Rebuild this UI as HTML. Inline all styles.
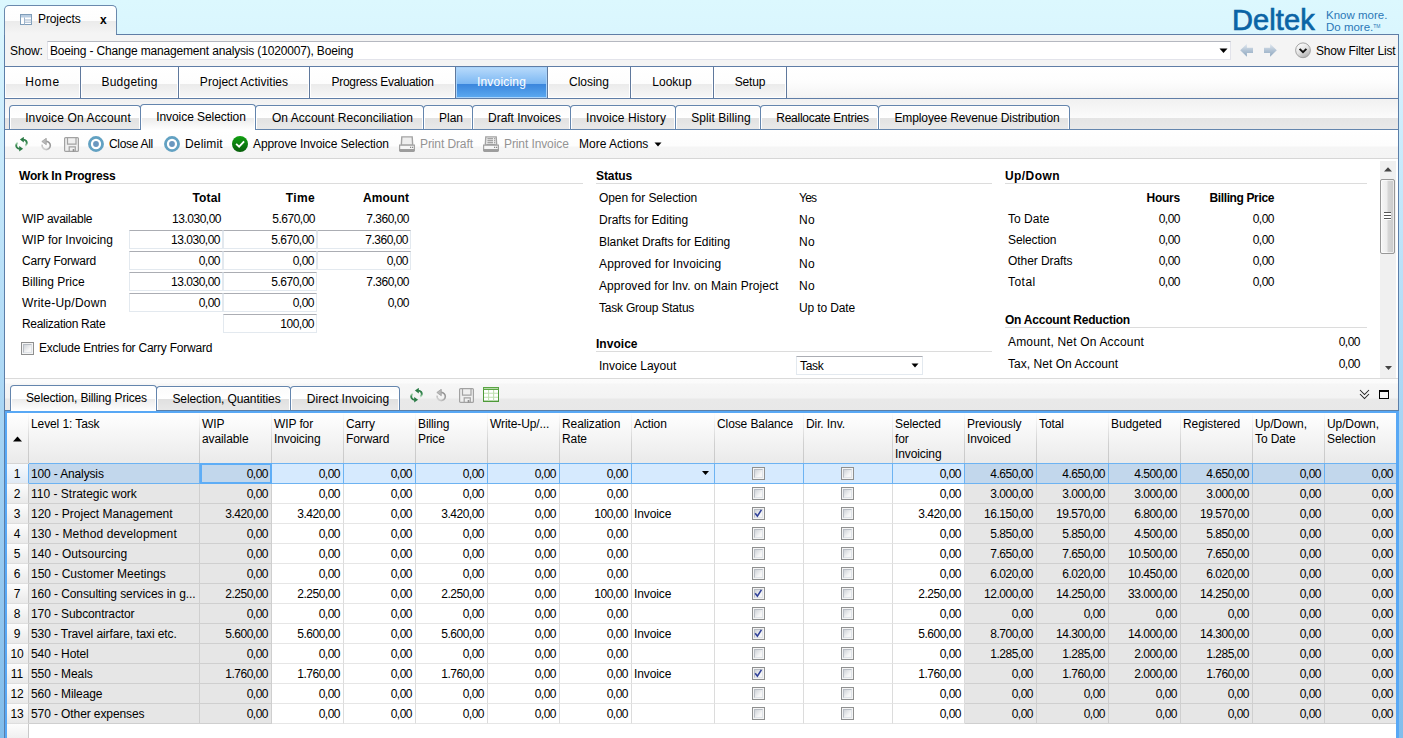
<!DOCTYPE html><html><head><meta charset="utf-8"><title>Projects</title><style>
*{box-sizing:border-box;margin:0;padding:0}
html,body{width:1403px;height:738px;overflow:hidden}
body{position:relative;font:12px "Liberation Sans",sans-serif;color:#000;letter-spacing:-0.1px;
 background:linear-gradient(#dcf8fe 0,#daf6fe 30px,#d0effd 100px,#b6def7 300px,#93c7ef 600px,#81bdeb 738px);}
.a{position:absolute;white-space:nowrap}
.t{position:absolute;white-space:nowrap;line-height:16px;height:16px}
.b{font-weight:bold}
.r{text-align:right}
.g{color:#9a9a9a}
#win{left:4px;top:34px;width:1395px;height:704px;background:#fff;border-left:1px solid #5c7ea8;border-right:1px solid #5c7ea8}
.hl{position:absolute;height:1px;background:#5f7da6}
.mt{position:absolute;top:67px;height:31px;line-height:31px;text-align:center;letter-spacing:0.15px;border-right:1px solid #5f789c;
 background:linear-gradient(#fff 0,#fdfdfd 54%,#ebebeb 55%,#f7f7f7 100%);box-shadow:inset 0 0 0 1px #fff}
.st{position:absolute;top:105px;height:24px;line-height:24px;text-align:center;padding-left:6px;border:1px solid #6485ad;border-bottom:none;border-radius:4px 4px 0 0;
 background:linear-gradient(#fbfbfb 0,#fff 52%,#e2e2e2 53%,#e9e9e9 100%);box-shadow:inset 1px 1px 0 #fff,inset -1px 0 0 #fff}
.st.sel{top:104px;height:26px;background:linear-gradient(#fff 0,#fff 50%,#ebebeb 51%,#fff 100%);line-height:25px;z-index:2}
.lt{position:absolute;top:386px;height:24px;line-height:25px;text-align:center;padding-left:6px;border:1px solid #6485ad;border-bottom:none;border-radius:4px 4px 0 0;
 background:linear-gradient(#fbfbfb 0,#fff 52%,#e0e0e0 53%,#e8e8e8 100%);box-shadow:inset 1px 1px 0 #fff,inset -1px 0 0 #fff}
.lt.sel{top:385px;height:26px;line-height:24px;background:linear-gradient(#fff 0,#fff 50%,#ebebeb 51%,#fff 100%);z-index:2}
.sec{position:absolute;height:1px;background:#dcdcdc}
.inp{position:absolute;height:19px;border:1px solid #e3e9ef;border-top-color:#abadb3;background:#fff;text-align:right;line-height:19px;padding-right:2px}
.cb{position:absolute;width:13px;height:13px;border:1px solid #8e8f8f;background:#f4f4f4}
.cb i{position:absolute;left:1px;top:1px;width:9px;height:9px;border:1px solid #b8bdc4;border-right-color:#dfe3e8;border-bottom-color:#dfe3e8;background:linear-gradient(135deg,#cfd3d8,#f6f6f6 70%)}
.hc{position:absolute;top:413px;height:50px;border-right:1px solid #d5d5d5;border-image:linear-gradient(#ffffff,#d0d0d0 60%,#c8c8c8) 1;line-height:15px;padding:4px 0 0 2px;white-space:normal;overflow:hidden}
.row{position:absolute;left:7px;width:1389px;height:20px}
.c{position:absolute;top:0;height:20px;line-height:20px;border-right:1px solid #dcdcdc;border-bottom:1px solid #e6e6e6;text-align:right;padding-right:2px;background:#fff;white-space:nowrap;overflow:hidden}
.c.gr{background:#e6e6e6;border-right-color:#cfcfcf;border-bottom-color:#cfcfcf}
.c.l{text-align:left;padding-left:2px;padding-right:0}
.c.n{background:linear-gradient(#fdfdfd,#e9e9e9);text-align:center;padding:0 1px 0 0;border-right-color:#c9c9c9;border-bottom-color:#dedede}
.row.s .c{background:#d6eafe;border-bottom-color:#6db3f2;border-right-color:#6db3f2}
.row.s .c.gr{background:#c2d7ec;border-right-color:#6db3f2}
.row.s .c.n{background:linear-gradient(#f6fafe,#dfe9f4);border-bottom-color:#dedede;border-right-color:#6db3f2}
.c.last{border-right:none}
.c.num{letter-spacing:-0.5px;padding-right:3px}
.num{letter-spacing:-0.5px}
</style></head><body>
<div class="a" id="win"></div>
<div class="a" style="left:4px;top:5px;width:113px;height:30px;border:1px solid #6a89ad;border-bottom:none;border-radius:5px 5px 0 0;background:linear-gradient(#fff 0,#fdfdfd 50%,#ebebeb 52%,#f5f5f5 100%)"></div>
<svg class="a" style="left:20px;top:14px" width="12" height="11" viewBox="0 0 12 11"><rect x="0.5" y="0.5" width="11" height="10" fill="#fff" stroke="#7f9db9"/><rect x="1" y="1" width="10" height="2.5" fill="#b9cde2"/><path d="M4.5 3.5v7M4.5 6h7M4.5 8.2h7" stroke="#9fb4cc" stroke-width="1" fill="none"/></svg>
<div class="t" style="left:38px;top:11px">Projects</div>
<div class="t b" style="left:100px;top:12px;font-size:12px;letter-spacing:0">x</div>
<div class="a" style="left:1232px;top:2px;font-size:29px;line-height:36px;color:#0b64a5;letter-spacing:0.1px;-webkit-text-stroke:0.7px #0b64a5">Deltek</div>
<div class="a" style="left:1326px;top:10px;font-size:11.5px;line-height:11px;color:#2b78b7;letter-spacing:0px">Know more.<br>Do more.<span style="font-size:5px;vertical-align:3px">TM</span></div>
<div class="hl" style="left:116px;top:34px;width:1283px"></div>
<div class="hl" style="left:5px;top:66px;width:1393px"></div>
<div class="hl" style="left:5px;top:98px;width:1393px"></div>
<div class="a" style="left:5px;top:35px;width:1393px;height:31px;background:#f4f4f4"></div>
<div class="a" style="left:5px;top:34px;width:111px;height:2px;background:#f4f4f4"></div>
<div class="t" style="left:10px;top:43px">Show:</div>
<div class="a" style="left:47px;top:41px;width:1184px;height:19px;border:1px solid #e2e3ea;border-top-color:#b5b8c0;background:#fff"></div>
<div class="t" style="left:50px;top:43px;letter-spacing:-0.17px">Boeing - Change management analysis (1020007), Boeing</div>
<svg class="a" style="left:1219px;top:48px" width="9" height="6"><path d="M0.5 0.5h8L4.5 5z" fill="#000"/></svg>
<svg class="a" style="left:1240px;top:43px" width="14" height="15" viewBox="0 0 14 15"><defs><linearGradient id="ag" x1="0" y1="0" x2="0" y2="1"><stop offset="0" stop-color="#e3eaf1"/><stop offset="0.5" stop-color="#b3c4d5"/><stop offset="1" stop-color="#8ea7bf"/></linearGradient></defs><path d="M0.2 7.3L6.9 0.8V4.8H13V9.9H6.9V13.8z" fill="url(#ag)"/></svg>
<svg class="a" style="left:1264px;top:43px" width="14" height="15" viewBox="0 0 14 15"><path d="M12.8 7.3L6.1 0.8V4.8H0V9.9H6.1V13.8z" fill="url(#ag)"/></svg>
<svg class="a" style="left:1295px;top:42px" width="16" height="17" viewBox="0 0 16 17"><defs><linearGradient id="rb" x1="0.2" y1="0" x2="0.8" y2="1"><stop offset="0" stop-color="#ffffff"/><stop offset="0.5" stop-color="#e2e2e2"/><stop offset="1" stop-color="#a9a9a9"/></linearGradient></defs><circle cx="8" cy="8.3" r="7.4" fill="url(#rb)" stroke="#9a9a9a" stroke-width="0.9"/><path d="M4.6 6.8L8 10.2l3.4-3.4" stroke="#111" stroke-width="1.9" fill="none"/></svg>
<div class="t" style="left:1316px;top:43px;letter-spacing:-0.16px">Show Filter List</div>
<div class="a" style="left:5px;top:67px;width:1393px;height:31px;background:linear-gradient(#fff 0,#fdfdfd 50%,#f3f3f3 100%)"></div>
<div class="mt" style="left:5px;width:76px;letter-spacing:0.66px">Home</div>
<div class="mt" style="left:81px;width:98px;letter-spacing:0.24px">Budgeting</div>
<div class="mt" style="left:179px;width:131px;letter-spacing:0.05px">Project Activities</div>
<div class="mt" style="left:310px;width:146px;letter-spacing:-0.28px">Progress Evaluation</div>
<div class="mt" style="left:456px;width:92px;color:#fff;background:linear-gradient(#b9dbfb 0,#7db8f3 54%,#3a85dc 55%,#5caaf1 100%);box-shadow:inset 0 0 0 1px #a9d3fa;letter-spacing:0.19px">Invoicing</div>
<div class="mt" style="left:548px;width:83px;letter-spacing:-0.02px">Closing</div>
<div class="mt" style="left:631px;width:83px;letter-spacing:0.01px">Lookup</div>
<div class="mt" style="left:714px;width:73px;letter-spacing:-0.19px">Setup</div>
<div class="a" style="left:5px;top:99px;width:1393px;height:31px;background:linear-gradient(#f1f1f1 0,#fbfbfb 19px,#e4e4e4 19px,#e9e9e9 30px)"></div>
<div class="st" style="left:9px;width:132px;letter-spacing:0.13px">Invoice On Account</div>
<div class="st sel" style="left:140px;width:116px;letter-spacing:-0.06px">Invoice Selection</div>
<div class="st" style="left:255px;width:169px;letter-spacing:0.04px">On Account Reconciliation</div>
<div class="st" style="left:423px;width:50px;letter-spacing:-0.01px">Plan</div>
<div class="st" style="left:472px;width:99px;letter-spacing:-0.04px">Draft Invoices</div>
<div class="st" style="left:570px;width:106px;letter-spacing:0.09px">Invoice History</div>
<div class="st" style="left:675px;width:86px;letter-spacing:0.08px">Split Billing</div>
<div class="st" style="left:760px;width:119px;letter-spacing:-0.28px">Reallocate Entries</div>
<div class="st" style="left:878px;width:192px;letter-spacing:-0.10px">Employee Revenue Distribution</div>
<div class="hl" style="left:5px;top:129px;width:136px;background:#6485ad"></div>
<div class="hl" style="left:255px;top:129px;width:1143px;background:#6485ad"></div>
<div class="a" style="left:5px;top:130px;width:1393px;height:28px;background:linear-gradient(#fff 0,#fdfdfd 16px,#f5f5f5 17px,#f4f4f4 100%)"></div>
<div class="a" style="left:5px;top:158px;width:1393px;height:1px;background:#d6d6d6"></div>
<svg class="a" style="left:15px;top:137px" width="13" height="15" viewBox="0 0 13 15"><defs><linearGradient id="ra1" x1="0" y1="0" x2="0" y2="1"><stop offset="0" stop-color="#2a7a45"/><stop offset="0.55" stop-color="#3a8a52"/><stop offset="1" stop-color="#c2e6c8"/></linearGradient><linearGradient id="rb1" x1="0" y1="1" x2="0" y2="0"><stop offset="0" stop-color="#2a7a45"/><stop offset="0.55" stop-color="#3a8a52"/><stop offset="1" stop-color="#c2e6c8"/></linearGradient></defs><path d="M8.2 2.6C10.8 2.6 12.1 4.5 11.7 6.7C11.5 7.7 11 8.4 10.2 8.8" stroke="url(#ra1)" stroke-width="1.9" fill="none"/><path d="M4.9 2.6L8.8 -0.2V5.4z" fill="#2a7a45"/><path d="M4.8 11.7C2.2 11.7 0.9 9.8 1.3 7.6C1.5 6.6 2 5.9 2.8 5.5" stroke="url(#rb1)" stroke-width="1.9" fill="none"/><path d="M8.1 11.7L4.2 8.9V14.5z" fill="#2a7a45"/></svg>
<svg class="a" style="left:41px;top:138px" width="11" height="13" viewBox="0 0 11 13"><defs><linearGradient id="ug2" x1="1" y1="0" x2="0" y2="1"><stop offset="0" stop-color="#8c8c8c"/><stop offset="0.5" stop-color="#a8a8a8"/><stop offset="1" stop-color="#dedede"/></linearGradient></defs><path d="M5.2 3.4A4.1 4.1 0 1 1 1.2 6.6" stroke="url(#ug2)" stroke-width="1.6" fill="none"/><path d="M0.8 3.5L5.3 0.2V6.8z" fill="#b9b9b9" stroke="#9a9a9a" stroke-width="0.7"/></svg>
<svg class="a" style="left:64px;top:137px" width="15" height="15" viewBox="0 0 15 15"><rect x="0.6" y="0.6" width="13.8" height="13.8" rx="1" fill="#f0f0f0" stroke="#a2a2a2" stroke-width="1.2"/><path d="M3.5 0.6V7.2H12V0.6M5.2 14.4V9.9H11.3V14.4" fill="none" stroke="#a2a2a2" stroke-width="1.2"/><rect x="8.7" y="12" width="1.6" height="2.6" fill="#909090"/></svg>
<svg class="a" style="left:88px;top:136px" width="16" height="16" viewBox="0 0 16 16"><circle cx="8" cy="8" r="6.55" fill="#fff" stroke="#62a1c2" stroke-width="2.8"/><circle cx="8" cy="8" r="2.9" fill="#6a97bf"/></svg>
<div class="t" style="left:109px;top:136px;letter-spacing:-0.3px">Close All</div>
<svg class="a" style="left:164px;top:136px" width="16" height="16" viewBox="0 0 16 16"><circle cx="8" cy="8" r="6.55" fill="#fff" stroke="#62a1c2" stroke-width="2.8"/><circle cx="8" cy="8" r="2.9" fill="#6a97bf"/></svg>
<div class="t" style="left:185px;top:136px;letter-spacing:0.15px">Delimit</div>
<svg class="a" style="left:232px;top:136px" width="16" height="16" viewBox="0 0 16 16"><defs><linearGradient id="gg" x1="0" y1="0" x2="0" y2="1"><stop offset="0" stop-color="#12a012"/><stop offset="1" stop-color="#075e0b"/></linearGradient></defs><circle cx="8" cy="8" r="8" fill="url(#gg)"/><path d="M4.1 7.8L7.1 10.7L12.1 5.3" stroke="#fff" stroke-width="1.8" fill="none"/></svg>
<div class="t" style="left:253px;top:136px;letter-spacing:-0.12px">Approve Invoice Selection</div>
<svg class="a" style="left:399px;top:136px" width="16" height="16" viewBox="0 0 16 16"><path d="M2.8 0.9h10.4l0.5 8.3H2.3z" fill="#eeeeee" stroke="#a3a3a3" stroke-width="1.4"/><path d="M0.6 9.2h14.8v4.3H0.6z" fill="#f6f6f6" stroke="#a3a3a3" stroke-width="1.2"/><path d="M0 13.2h16v1.4a1.4 1.4 0 0 1-1.4 1.4H1.4A1.4 1.4 0 0 1 0 14.6z" fill="#9d9d9d"/><rect x="11" y="10.7" width="1.2" height="1.3" fill="#888"/><rect x="13" y="10.7" width="1.2" height="1.3" fill="#888"/></svg>
<div class="t" style="left:420px;top:136px;color:#939393">Print Draft</div>
<svg class="a" style="left:483px;top:136px" width="16" height="16" viewBox="0 0 16 16"><path d="M2.8 0.9h10.4l0.5 8.3H2.3z" fill="#eeeeee" stroke="#a3a3a3" stroke-width="1.4"/><path d="M4.4 2.7h5.6M4.4 4.7h5.6M4.4 6.7h5.6M11 2.7h1.2M11 4.7h1.2M11 6.7h1.2" stroke="#8a8a8a" stroke-width="1.1"/><rect x="3.5" y="8" width="9" height="1.2" fill="#9a9a9a"/><path d="M0.6 9.2h14.8v4.3H0.6z" fill="#f6f6f6" stroke="#a3a3a3" stroke-width="1.2"/><path d="M0 13.2h16v1.4a1.4 1.4 0 0 1-1.4 1.4H1.4A1.4 1.4 0 0 1 0 14.6z" fill="#9d9d9d"/><rect x="11" y="10.7" width="1.2" height="1.3" fill="#888"/><rect x="13" y="10.7" width="1.2" height="1.3" fill="#888"/></svg>
<div class="t" style="left:504px;top:136px;color:#939393">Print Invoice</div>
<div class="t" style="left:579px;top:136px;letter-spacing:0">More Actions</div>
<svg class="a" style="left:654px;top:142px" width="8" height="5"><path d="M0.5 0.5h7L4 4.5z" fill="#000"/></svg>
<div class="a" style="left:5px;top:159px;width:1393px;height:219px;background:#fff"></div>
<div class="t b" style="left:19px;top:168px;letter-spacing:-0.16px">Work In Progress</div>
<div class="sec" style="left:19px;top:183px;width:564px"></div>
<div class="t r b" style="left:121px;width:100px;top:190px;letter-spacing:0.16px">Total</div>
<div class="t r b" style="left:215px;width:100px;top:190px;letter-spacing:0.34px">Time</div>
<div class="t r b" style="left:309px;width:100px;top:190px;letter-spacing:0.12px">Amount</div>
<div class="t " style="left:22px;top:211px;letter-spacing:-0.22px">WIP available</div>
<div class="t r  num" style="left:121px;width:100px;top:211px">13.030,00</div>
<div class="t r  num" style="left:215px;width:100px;top:211px">5.670,00</div>
<div class="t r  num" style="left:309px;width:100px;top:211px">7.360,00</div>
<div class="t " style="left:22px;top:232px;letter-spacing:0.03px">WIP for Invoicing</div>
<div class="inp num" style="left:129px;top:230px;width:94px">13.030,00</div>
<div class="inp num" style="left:223px;top:230px;width:94px">5.670,00</div>
<div class="inp num" style="left:317px;top:230px;width:94px">7.360,00</div>
<div class="t " style="left:22px;top:253px;letter-spacing:-0.21px">Carry Forward</div>
<div class="inp num" style="left:129px;top:251px;width:94px">0,00</div>
<div class="inp num" style="left:223px;top:251px;width:94px">0,00</div>
<div class="inp num" style="left:317px;top:251px;width:94px">0,00</div>
<div class="t " style="left:22px;top:274px;letter-spacing:-0.01px">Billing Price</div>
<div class="inp num" style="left:129px;top:272px;width:94px">13.030,00</div>
<div class="inp num" style="left:223px;top:272px;width:94px">5.670,00</div>
<div class="t r  num" style="left:309px;width:100px;top:274px">7.360,00</div>
<div class="t " style="left:22px;top:295px;letter-spacing:0.27px">Write-Up/Down</div>
<div class="inp num" style="left:129px;top:293px;width:94px">0,00</div>
<div class="inp num" style="left:223px;top:293px;width:94px">0,00</div>
<div class="t r  num" style="left:309px;width:100px;top:295px">0,00</div>
<div class="t " style="left:22px;top:316px;letter-spacing:-0.30px">Realization Rate</div>
<div class="inp num" style="left:223px;top:314px;width:94px">100,00</div>
<div class="cb" style="left:21px;top:342px"><i></i></div>
<div class="t " style="left:39px;top:340px;letter-spacing:-0.23px">Exclude Entries for Carry Forward</div>
<div class="t b" style="left:596px;top:168px;letter-spacing:-0.09px">Status</div>
<div class="sec" style="left:596px;top:183px;width:396px"></div>
<div class="t " style="left:599px;top:190px;letter-spacing:-0.07px">Open for Selection</div>
<div class="t " style="left:799px;top:190px;letter-spacing:-0.74px">Yes</div>
<div class="t " style="left:599px;top:212px;letter-spacing:-0.01px">Drafts for Editing</div>
<div class="t " style="left:799px;top:212px;letter-spacing:0.26px">No</div>
<div class="t " style="left:599px;top:234px;letter-spacing:-0.06px">Blanket Drafts for Editing</div>
<div class="t " style="left:799px;top:234px;letter-spacing:0.26px">No</div>
<div class="t " style="left:599px;top:256px;letter-spacing:0.13px">Approved for Invoicing</div>
<div class="t " style="left:799px;top:256px;letter-spacing:0.26px">No</div>
<div class="t " style="left:599px;top:278px;letter-spacing:0.07px">Approved for Inv. on Main Project</div>
<div class="t " style="left:799px;top:278px;letter-spacing:0.26px">No</div>
<div class="t " style="left:599px;top:300px;letter-spacing:-0.21px">Task Group Status</div>
<div class="t " style="left:799px;top:300px;letter-spacing:-0.14px">Up to Date</div>
<div class="t b" style="left:596px;top:336px;letter-spacing:0.03px">Invoice</div>
<div class="sec" style="left:596px;top:351px;width:396px"></div>
<div class="t " style="left:599px;top:358px;letter-spacing:-0.01px">Invoice Layout</div>
<div class="a" style="left:796px;top:356px;width:127px;height:19px;border:1px solid #e3e9ef;border-top-color:#abadb3;background:#fff"></div>
<div class="t " style="left:800px;top:358px;letter-spacing:-0.32px">Task</div>
<svg class="a" style="left:911px;top:363px" width="8" height="5"><path d="M0.5 0.5h7L4 4.5z" fill="#000"/></svg>
<div class="t b" style="left:1005px;top:168px;letter-spacing:0.43px">Up/Down</div>
<div class="sec" style="left:1005px;top:183px;width:362px"></div>
<div class="t r b" style="left:1080px;width:100px;top:190px;letter-spacing:-0.24px">Hours</div>
<div class="t r b" style="left:1174px;width:100px;top:190px;letter-spacing:-0.37px">Billing Price</div>
<div class="t " style="left:1008px;top:211px;letter-spacing:0.02px">To Date</div>
<div class="t r  num" style="left:1080px;width:100px;top:211px">0,00</div>
<div class="t r  num" style="left:1174px;width:100px;top:211px">0,00</div>
<div class="t " style="left:1008px;top:232px;letter-spacing:-0.12px">Selection</div>
<div class="t r  num" style="left:1080px;width:100px;top:232px">0,00</div>
<div class="t r  num" style="left:1174px;width:100px;top:232px">0,00</div>
<div class="t " style="left:1008px;top:253px;letter-spacing:-0.07px">Other Drafts</div>
<div class="t r  num" style="left:1080px;width:100px;top:253px">0,00</div>
<div class="t r  num" style="left:1174px;width:100px;top:253px">0,00</div>
<div class="t " style="left:1008px;top:274px;letter-spacing:0.46px">Total</div>
<div class="t r  num" style="left:1080px;width:100px;top:274px">0,00</div>
<div class="t r  num" style="left:1174px;width:100px;top:274px">0,00</div>
<div class="t b" style="left:1005px;top:312px;letter-spacing:-0.23px">On Account Reduction</div>
<div class="sec" style="left:1005px;top:327px;width:362px"></div>
<div class="t " style="left:1008px;top:334px;letter-spacing:0.18px">Amount, Net On Account</div>
<div class="t r  num" style="left:1260px;width:100px;top:334px">0,00</div>
<div class="t " style="left:1008px;top:356px;letter-spacing:0.04px">Tax, Net On Account</div>
<div class="t r  num" style="left:1260px;width:100px;top:356px">0,00</div>
<div class="a" style="left:1380px;top:161px;width:16px;height:217px;background:#f0f0f0"></div>
<svg class="a" style="left:1384px;top:167px" width="8" height="5"><path d="M0 4.5L4 0.3 8 4.5z" fill="#444"/></svg>
<svg class="a" style="left:1385px;top:366px" width="7" height="4"><path d="M0 0h7L3.5 4z" fill="#444"/></svg>
<div class="a" style="left:1380px;top:179px;width:15px;height:75px;border:1px solid #979797;border-radius:2px;background:linear-gradient(90deg,#f6f6f6 0,#ededed 45%,#d6d6d6 55%,#c9c9c9 100%);box-shadow:inset 0 0 0 1px rgba(255,255,255,.6)"></div>
<div class="a" style="left:1384px;top:212px;width:7px;height:8px;background:linear-gradient(#555 0,#555 1px,#fff 1px,#fff 3px,#555 3px,#555 4px,#fff 4px,#fff 6px,#555 6px,#555 7px,#fff 7px)"></div>
<div class="a" style="left:5px;top:378px;width:1393px;height:1px;background:#dadada"></div>
<div class="a" style="left:5px;top:379px;width:1393px;height:32px;background:linear-gradient(#fcfcfc 0,#fbfbfb 4px,#f6f6f6 5px,#f3f3f3 19px,#e9e9e9 20px,#e8e8e8 100%)"></div>
<div class="hl" style="left:156px;top:410px;width:1242px;background:#5a7fa8"></div>
<div class="hl" style="left:5px;top:410px;width:6px;background:#5a7fa8"></div>
<div class="lt sel" style="left:10px;width:147px;letter-spacing:-0.15px">Selection, Billing Prices</div>
<div class="lt" style="left:156px;width:135px;letter-spacing:-0.09px">Selection, Quantities</div>
<div class="lt" style="left:290px;width:110px;letter-spacing:0.02px">Direct Invoicing</div>
<svg class="a" style="left:410px;top:388px" width="13" height="15" viewBox="0 0 13 15"><defs><linearGradient id="ra3" x1="0" y1="0" x2="0" y2="1"><stop offset="0" stop-color="#2a7a45"/><stop offset="0.55" stop-color="#3a8a52"/><stop offset="1" stop-color="#c2e6c8"/></linearGradient><linearGradient id="rb3" x1="0" y1="1" x2="0" y2="0"><stop offset="0" stop-color="#2a7a45"/><stop offset="0.55" stop-color="#3a8a52"/><stop offset="1" stop-color="#c2e6c8"/></linearGradient></defs><path d="M8.2 2.6C10.8 2.6 12.1 4.5 11.7 6.7C11.5 7.7 11 8.4 10.2 8.8" stroke="url(#ra3)" stroke-width="1.9" fill="none"/><path d="M4.9 2.6L8.8 -0.2V5.4z" fill="#2a7a45"/><path d="M4.8 11.7C2.2 11.7 0.9 9.8 1.3 7.6C1.5 6.6 2 5.9 2.8 5.5" stroke="url(#rb3)" stroke-width="1.9" fill="none"/><path d="M8.1 11.7L4.2 8.9V14.5z" fill="#2a7a45"/></svg>
<svg class="a" style="left:436px;top:389px" width="11" height="13" viewBox="0 0 11 13"><defs><linearGradient id="ug4" x1="1" y1="0" x2="0" y2="1"><stop offset="0" stop-color="#8c8c8c"/><stop offset="0.5" stop-color="#a8a8a8"/><stop offset="1" stop-color="#dedede"/></linearGradient></defs><path d="M5.2 3.4A4.1 4.1 0 1 1 1.2 6.6" stroke="url(#ug4)" stroke-width="1.6" fill="none"/><path d="M0.8 3.5L5.3 0.2V6.8z" fill="#b9b9b9" stroke="#9a9a9a" stroke-width="0.7"/></svg>
<svg class="a" style="left:459px;top:388px" width="15" height="15" viewBox="0 0 15 15"><rect x="0.6" y="0.6" width="13.8" height="13.8" rx="1" fill="#f0f0f0" stroke="#a2a2a2" stroke-width="1.2"/><path d="M3.5 0.6V7.2H12V0.6M5.2 14.4V9.9H11.3V14.4" fill="none" stroke="#a2a2a2" stroke-width="1.2"/><rect x="8.7" y="12" width="1.6" height="2.6" fill="#909090"/></svg>
<svg class="a" style="left:483px;top:387px" width="16" height="15" viewBox="0 0 16 15"><rect x="0.5" y="0.5" width="15" height="14" fill="#fff" stroke="#4e9a38"/><rect x="0" y="0" width="16" height="3" fill="#5aa543"/><rect x="1" y="1" width="14" height="0.8" fill="#cfe8c4"/><rect x="0" y="13.6" width="16" height="1.4" fill="#4e9a38"/><path d="M1 6.3h14M1 10.3h14M5.6 3v11M10.6 3v11" stroke="#bfe0b0" stroke-width="1.1" fill="none"/></svg>
<svg class="a" style="left:1359px;top:389px" width="11" height="11" viewBox="0 0 11 11"><path d="M1 1l4.5 4.5L10 1M1 5l4.5 4.5L10 5" stroke="#222" stroke-width="1.05" fill="none"/></svg>
<div class="a" style="left:1379px;top:390px;width:10px;height:9px;border:1px solid #000;border-top-width:2px;background:#f4f4f4"></div>
<div class="a" style="left:1398px;top:411px;width:1px;height:327px;background:#58a8f5;z-index:3"></div>
<div class="a" style="left:5px;top:411px;width:1393px;height:327px;background:#fff;border:2px solid #58a8f5;border-bottom:none"></div>
<div class="a" style="left:7px;top:413px;width:1389px;height:51px;background:linear-gradient(#fff 0,#eaeaea 100%);border-bottom:1px solid #d5d5d5"></div>
<div class="hc" style="left:7px;width:22px"></div>
<div class="hc" style="left:29px;width:171px">Level 1: Task</div>
<div class="hc" style="left:200px;width:72px">WIP<br>available</div>
<div class="hc" style="left:272px;width:72px">WIP for<br>Invoicing</div>
<div class="hc" style="left:344px;width:72px">Carry<br>Forward</div>
<div class="hc" style="left:416px;width:72px">Billing<br>Price</div>
<div class="hc" style="left:488px;width:72px">Write-Up/...</div>
<div class="hc" style="left:560px;width:72px">Realization<br>Rate</div>
<div class="hc" style="left:632px;width:83px">Action</div>
<div class="hc" style="left:715px;width:89px">Close Balance</div>
<div class="hc" style="left:804px;width:89px">Dir. Inv.</div>
<div class="hc" style="left:893px;width:72px">Selected<br>for<br>Invoicing</div>
<div class="hc" style="left:965px;width:72px">Previously<br>Invoiced</div>
<div class="hc" style="left:1037px;width:72px">Total</div>
<div class="hc" style="left:1109px;width:72px">Budgeted</div>
<div class="hc" style="left:1181px;width:72px">Registered</div>
<div class="hc" style="left:1253px;width:72px">Up/Down,<br>To Date</div>
<div class="hc" style="left:1325px;width:71px;border-right:none">Up/Down,<br>Selection</div>
<svg class="a" style="left:13px;top:436px" width="9" height="6"><path d="M0 5.5L4.5 0.5 9 5.5z" fill="#000"/></svg>
<div class="a" style="left:7px;top:464px;width:22px;height:274px;background:linear-gradient(#fdfdfd 260px,#f0f0f0 274px);border-right:1px solid #c9c9c9"></div>
<div class="row s" style="top:464px">
<div class="c n" style="left:0px;width:22px">1</div><div class="c gr l" style="left:22px;width:171px"><span style="letter-spacing:-0.14px">100 - Analysis</span></div><div class="c gr num" style="left:193px;width:72px">0,00</div><div class="c num" style="left:265px;width:72px">0,00</div><div class="c num" style="left:337px;width:72px">0,00</div><div class="c num" style="left:409px;width:72px">0,00</div><div class="c num" style="left:481px;width:72px">0,00</div><div class="c num" style="left:553px;width:72px">0,00</div><div class="c l" style="left:625px;width:83px"></div><div class="c " style="left:708px;width:89px"><div class="cb" style="left:37px;top:3px"><i></i></div></div><div class="c " style="left:797px;width:89px"><div class="cb" style="left:37px;top:3px"><i></i></div></div><div class="c num" style="left:886px;width:72px">0,00</div><div class="c gr num" style="left:958px;width:72px">4.650,00</div><div class="c gr num" style="left:1030px;width:72px">4.650,00</div><div class="c gr num" style="left:1102px;width:72px">4.500,00</div><div class="c gr num" style="left:1174px;width:72px">4.650,00</div><div class="c gr num" style="left:1246px;width:72px">0,00</div><div class="c gr num last" style="left:1318px;width:71px">0,00</div></div>
<div class="row" style="top:484px">
<div class="c n" style="left:0px;width:22px">2</div><div class="c gr l" style="left:22px;width:171px"><span style="letter-spacing:0.00px">110 - Strategic work</span></div><div class="c gr num" style="left:193px;width:72px">0,00</div><div class="c num" style="left:265px;width:72px">0,00</div><div class="c num" style="left:337px;width:72px">0,00</div><div class="c num" style="left:409px;width:72px">0,00</div><div class="c num" style="left:481px;width:72px">0,00</div><div class="c num" style="left:553px;width:72px">0,00</div><div class="c l" style="left:625px;width:83px"></div><div class="c " style="left:708px;width:89px"><div class="cb" style="left:37px;top:3px"><i></i></div></div><div class="c " style="left:797px;width:89px"><div class="cb" style="left:37px;top:3px"><i></i></div></div><div class="c num" style="left:886px;width:72px">0,00</div><div class="c gr num" style="left:958px;width:72px">3.000,00</div><div class="c gr num" style="left:1030px;width:72px">3.000,00</div><div class="c gr num" style="left:1102px;width:72px">3.000,00</div><div class="c gr num" style="left:1174px;width:72px">3.000,00</div><div class="c gr num" style="left:1246px;width:72px">0,00</div><div class="c gr num last" style="left:1318px;width:71px">0,00</div></div>
<div class="row" style="top:504px">
<div class="c n" style="left:0px;width:22px">3</div><div class="c gr l" style="left:22px;width:171px"><span style="letter-spacing:0.01px">120 - Project Management</span></div><div class="c gr num" style="left:193px;width:72px">3.420,00</div><div class="c num" style="left:265px;width:72px">3.420,00</div><div class="c num" style="left:337px;width:72px">0,00</div><div class="c num" style="left:409px;width:72px">3.420,00</div><div class="c num" style="left:481px;width:72px">0,00</div><div class="c num" style="left:553px;width:72px">100,00</div><div class="c l" style="left:625px;width:83px">Invoice</div><div class="c " style="left:708px;width:89px"><div class="cb" style="left:37px;top:3px"><i></i><svg style="position:absolute;left:1px;top:1px" width="9" height="9" viewBox="0 0 9 9"><path d="M1.2 4.2l2.2 3 4-6.4" stroke="#31419a" stroke-width="1.6" fill="none"/></svg></div></div><div class="c " style="left:797px;width:89px"><div class="cb" style="left:37px;top:3px"><i></i></div></div><div class="c num" style="left:886px;width:72px">3.420,00</div><div class="c gr num" style="left:958px;width:72px">16.150,00</div><div class="c gr num" style="left:1030px;width:72px">19.570,00</div><div class="c gr num" style="left:1102px;width:72px">6.800,00</div><div class="c gr num" style="left:1174px;width:72px">19.570,00</div><div class="c gr num" style="left:1246px;width:72px">0,00</div><div class="c gr num last" style="left:1318px;width:71px">0,00</div></div>
<div class="row" style="top:524px">
<div class="c n" style="left:0px;width:22px">4</div><div class="c gr l" style="left:22px;width:171px"><span style="letter-spacing:0.13px">130 - Method development</span></div><div class="c gr num" style="left:193px;width:72px">0,00</div><div class="c num" style="left:265px;width:72px">0,00</div><div class="c num" style="left:337px;width:72px">0,00</div><div class="c num" style="left:409px;width:72px">0,00</div><div class="c num" style="left:481px;width:72px">0,00</div><div class="c num" style="left:553px;width:72px">0,00</div><div class="c l" style="left:625px;width:83px"></div><div class="c " style="left:708px;width:89px"><div class="cb" style="left:37px;top:3px"><i></i></div></div><div class="c " style="left:797px;width:89px"><div class="cb" style="left:37px;top:3px"><i></i></div></div><div class="c num" style="left:886px;width:72px">0,00</div><div class="c gr num" style="left:958px;width:72px">5.850,00</div><div class="c gr num" style="left:1030px;width:72px">5.850,00</div><div class="c gr num" style="left:1102px;width:72px">4.500,00</div><div class="c gr num" style="left:1174px;width:72px">5.850,00</div><div class="c gr num" style="left:1246px;width:72px">0,00</div><div class="c gr num last" style="left:1318px;width:71px">0,00</div></div>
<div class="row" style="top:544px">
<div class="c n" style="left:0px;width:22px">5</div><div class="c gr l" style="left:22px;width:171px"><span style="letter-spacing:0.05px">140 - Outsourcing</span></div><div class="c gr num" style="left:193px;width:72px">0,00</div><div class="c num" style="left:265px;width:72px">0,00</div><div class="c num" style="left:337px;width:72px">0,00</div><div class="c num" style="left:409px;width:72px">0,00</div><div class="c num" style="left:481px;width:72px">0,00</div><div class="c num" style="left:553px;width:72px">0,00</div><div class="c l" style="left:625px;width:83px"></div><div class="c " style="left:708px;width:89px"><div class="cb" style="left:37px;top:3px"><i></i></div></div><div class="c " style="left:797px;width:89px"><div class="cb" style="left:37px;top:3px"><i></i></div></div><div class="c num" style="left:886px;width:72px">0,00</div><div class="c gr num" style="left:958px;width:72px">7.650,00</div><div class="c gr num" style="left:1030px;width:72px">7.650,00</div><div class="c gr num" style="left:1102px;width:72px">10.500,00</div><div class="c gr num" style="left:1174px;width:72px">7.650,00</div><div class="c gr num" style="left:1246px;width:72px">0,00</div><div class="c gr num last" style="left:1318px;width:71px">0,00</div></div>
<div class="row" style="top:564px">
<div class="c n" style="left:0px;width:22px">6</div><div class="c gr l" style="left:22px;width:171px"><span style="letter-spacing:-0.00px">150 - Customer Meetings</span></div><div class="c gr num" style="left:193px;width:72px">0,00</div><div class="c num" style="left:265px;width:72px">0,00</div><div class="c num" style="left:337px;width:72px">0,00</div><div class="c num" style="left:409px;width:72px">0,00</div><div class="c num" style="left:481px;width:72px">0,00</div><div class="c num" style="left:553px;width:72px">0,00</div><div class="c l" style="left:625px;width:83px"></div><div class="c " style="left:708px;width:89px"><div class="cb" style="left:37px;top:3px"><i></i></div></div><div class="c " style="left:797px;width:89px"><div class="cb" style="left:37px;top:3px"><i></i></div></div><div class="c num" style="left:886px;width:72px">0,00</div><div class="c gr num" style="left:958px;width:72px">6.020,00</div><div class="c gr num" style="left:1030px;width:72px">6.020,00</div><div class="c gr num" style="left:1102px;width:72px">10.450,00</div><div class="c gr num" style="left:1174px;width:72px">6.020,00</div><div class="c gr num" style="left:1246px;width:72px">0,00</div><div class="c gr num last" style="left:1318px;width:71px">0,00</div></div>
<div class="row" style="top:584px">
<div class="c n" style="left:0px;width:22px">7</div><div class="c gr l" style="left:22px;width:171px"><span style="letter-spacing:-0.09px">160 - Consulting services in g...</span></div><div class="c gr num" style="left:193px;width:72px">2.250,00</div><div class="c num" style="left:265px;width:72px">2.250,00</div><div class="c num" style="left:337px;width:72px">0,00</div><div class="c num" style="left:409px;width:72px">2.250,00</div><div class="c num" style="left:481px;width:72px">0,00</div><div class="c num" style="left:553px;width:72px">100,00</div><div class="c l" style="left:625px;width:83px">Invoice</div><div class="c " style="left:708px;width:89px"><div class="cb" style="left:37px;top:3px"><i></i><svg style="position:absolute;left:1px;top:1px" width="9" height="9" viewBox="0 0 9 9"><path d="M1.2 4.2l2.2 3 4-6.4" stroke="#31419a" stroke-width="1.6" fill="none"/></svg></div></div><div class="c " style="left:797px;width:89px"><div class="cb" style="left:37px;top:3px"><i></i></div></div><div class="c num" style="left:886px;width:72px">2.250,00</div><div class="c gr num" style="left:958px;width:72px">12.000,00</div><div class="c gr num" style="left:1030px;width:72px">14.250,00</div><div class="c gr num" style="left:1102px;width:72px">33.000,00</div><div class="c gr num" style="left:1174px;width:72px">14.250,00</div><div class="c gr num" style="left:1246px;width:72px">0,00</div><div class="c gr num last" style="left:1318px;width:71px">0,00</div></div>
<div class="row" style="top:604px">
<div class="c n" style="left:0px;width:22px">8</div><div class="c gr l" style="left:22px;width:171px"><span style="letter-spacing:-0.1px">170 - Subcontractor</span></div><div class="c gr num" style="left:193px;width:72px">0,00</div><div class="c num" style="left:265px;width:72px">0,00</div><div class="c num" style="left:337px;width:72px">0,00</div><div class="c num" style="left:409px;width:72px">0,00</div><div class="c num" style="left:481px;width:72px">0,00</div><div class="c num" style="left:553px;width:72px">0,00</div><div class="c l" style="left:625px;width:83px"></div><div class="c " style="left:708px;width:89px"><div class="cb" style="left:37px;top:3px"><i></i></div></div><div class="c " style="left:797px;width:89px"><div class="cb" style="left:37px;top:3px"><i></i></div></div><div class="c num" style="left:886px;width:72px">0,00</div><div class="c gr num" style="left:958px;width:72px">0,00</div><div class="c gr num" style="left:1030px;width:72px">0,00</div><div class="c gr num" style="left:1102px;width:72px">0,00</div><div class="c gr num" style="left:1174px;width:72px">0,00</div><div class="c gr num" style="left:1246px;width:72px">0,00</div><div class="c gr num last" style="left:1318px;width:71px">0,00</div></div>
<div class="row" style="top:624px">
<div class="c n" style="left:0px;width:22px">9</div><div class="c gr l" style="left:22px;width:171px"><span style="letter-spacing:-0.1px">530 - Travel airfare, taxi etc.</span></div><div class="c gr num" style="left:193px;width:72px">5.600,00</div><div class="c num" style="left:265px;width:72px">5.600,00</div><div class="c num" style="left:337px;width:72px">0,00</div><div class="c num" style="left:409px;width:72px">5.600,00</div><div class="c num" style="left:481px;width:72px">0,00</div><div class="c num" style="left:553px;width:72px">0,00</div><div class="c l" style="left:625px;width:83px">Invoice</div><div class="c " style="left:708px;width:89px"><div class="cb" style="left:37px;top:3px"><i></i><svg style="position:absolute;left:1px;top:1px" width="9" height="9" viewBox="0 0 9 9"><path d="M1.2 4.2l2.2 3 4-6.4" stroke="#31419a" stroke-width="1.6" fill="none"/></svg></div></div><div class="c " style="left:797px;width:89px"><div class="cb" style="left:37px;top:3px"><i></i></div></div><div class="c num" style="left:886px;width:72px">5.600,00</div><div class="c gr num" style="left:958px;width:72px">8.700,00</div><div class="c gr num" style="left:1030px;width:72px">14.300,00</div><div class="c gr num" style="left:1102px;width:72px">14.000,00</div><div class="c gr num" style="left:1174px;width:72px">14.300,00</div><div class="c gr num" style="left:1246px;width:72px">0,00</div><div class="c gr num last" style="left:1318px;width:71px">0,00</div></div>
<div class="row" style="top:644px">
<div class="c n" style="left:0px;width:22px">10</div><div class="c gr l" style="left:22px;width:171px"><span style="letter-spacing:-0.1px">540 - Hotel</span></div><div class="c gr num" style="left:193px;width:72px">0,00</div><div class="c num" style="left:265px;width:72px">0,00</div><div class="c num" style="left:337px;width:72px">0,00</div><div class="c num" style="left:409px;width:72px">0,00</div><div class="c num" style="left:481px;width:72px">0,00</div><div class="c num" style="left:553px;width:72px">0,00</div><div class="c l" style="left:625px;width:83px"></div><div class="c " style="left:708px;width:89px"><div class="cb" style="left:37px;top:3px"><i></i></div></div><div class="c " style="left:797px;width:89px"><div class="cb" style="left:37px;top:3px"><i></i></div></div><div class="c num" style="left:886px;width:72px">0,00</div><div class="c gr num" style="left:958px;width:72px">1.285,00</div><div class="c gr num" style="left:1030px;width:72px">1.285,00</div><div class="c gr num" style="left:1102px;width:72px">2.000,00</div><div class="c gr num" style="left:1174px;width:72px">1.285,00</div><div class="c gr num" style="left:1246px;width:72px">0,00</div><div class="c gr num last" style="left:1318px;width:71px">0,00</div></div>
<div class="row" style="top:664px">
<div class="c n" style="left:0px;width:22px">11</div><div class="c gr l" style="left:22px;width:171px"><span style="letter-spacing:-0.1px">550 - Meals</span></div><div class="c gr num" style="left:193px;width:72px">1.760,00</div><div class="c num" style="left:265px;width:72px">1.760,00</div><div class="c num" style="left:337px;width:72px">0,00</div><div class="c num" style="left:409px;width:72px">1.760,00</div><div class="c num" style="left:481px;width:72px">0,00</div><div class="c num" style="left:553px;width:72px">0,00</div><div class="c l" style="left:625px;width:83px">Invoice</div><div class="c " style="left:708px;width:89px"><div class="cb" style="left:37px;top:3px"><i></i><svg style="position:absolute;left:1px;top:1px" width="9" height="9" viewBox="0 0 9 9"><path d="M1.2 4.2l2.2 3 4-6.4" stroke="#31419a" stroke-width="1.6" fill="none"/></svg></div></div><div class="c " style="left:797px;width:89px"><div class="cb" style="left:37px;top:3px"><i></i></div></div><div class="c num" style="left:886px;width:72px">1.760,00</div><div class="c gr num" style="left:958px;width:72px">0,00</div><div class="c gr num" style="left:1030px;width:72px">1.760,00</div><div class="c gr num" style="left:1102px;width:72px">2.000,00</div><div class="c gr num" style="left:1174px;width:72px">1.760,00</div><div class="c gr num" style="left:1246px;width:72px">0,00</div><div class="c gr num last" style="left:1318px;width:71px">0,00</div></div>
<div class="row" style="top:684px">
<div class="c n" style="left:0px;width:22px">12</div><div class="c gr l" style="left:22px;width:171px"><span style="letter-spacing:-0.1px">560 - Mileage</span></div><div class="c gr num" style="left:193px;width:72px">0,00</div><div class="c num" style="left:265px;width:72px">0,00</div><div class="c num" style="left:337px;width:72px">0,00</div><div class="c num" style="left:409px;width:72px">0,00</div><div class="c num" style="left:481px;width:72px">0,00</div><div class="c num" style="left:553px;width:72px">0,00</div><div class="c l" style="left:625px;width:83px"></div><div class="c " style="left:708px;width:89px"><div class="cb" style="left:37px;top:3px"><i></i></div></div><div class="c " style="left:797px;width:89px"><div class="cb" style="left:37px;top:3px"><i></i></div></div><div class="c num" style="left:886px;width:72px">0,00</div><div class="c gr num" style="left:958px;width:72px">0,00</div><div class="c gr num" style="left:1030px;width:72px">0,00</div><div class="c gr num" style="left:1102px;width:72px">0,00</div><div class="c gr num" style="left:1174px;width:72px">0,00</div><div class="c gr num" style="left:1246px;width:72px">0,00</div><div class="c gr num last" style="left:1318px;width:71px">0,00</div></div>
<div class="row" style="top:704px">
<div class="c n" style="left:0px;width:22px">13</div><div class="c gr l" style="left:22px;width:171px"><span style="letter-spacing:-0.1px">570 - Other expenses</span></div><div class="c gr num" style="left:193px;width:72px">0,00</div><div class="c num" style="left:265px;width:72px">0,00</div><div class="c num" style="left:337px;width:72px">0,00</div><div class="c num" style="left:409px;width:72px">0,00</div><div class="c num" style="left:481px;width:72px">0,00</div><div class="c num" style="left:553px;width:72px">0,00</div><div class="c l" style="left:625px;width:83px"></div><div class="c " style="left:708px;width:89px"><div class="cb" style="left:37px;top:3px"><i></i></div></div><div class="c " style="left:797px;width:89px"><div class="cb" style="left:37px;top:3px"><i></i></div></div><div class="c num" style="left:886px;width:72px">0,00</div><div class="c gr num" style="left:958px;width:72px">0,00</div><div class="c gr num" style="left:1030px;width:72px">0,00</div><div class="c gr num" style="left:1102px;width:72px">0,00</div><div class="c gr num" style="left:1174px;width:72px">0,00</div><div class="c gr num" style="left:1246px;width:72px">0,00</div><div class="c gr num last" style="left:1318px;width:71px">0,00</div></div>
<div class="a" style="left:29px;top:463px;width:1367px;height:1px;background:#6db3f2"></div>
<div class="a" style="left:200px;top:463px;width:72px;height:21px;border:2px solid #5eadf6"></div>
<svg class="a" style="left:702px;top:471px" width="7" height="4"><path d="M0 0h7L3.5 4z" fill="#000"/></svg>
</body></html>
